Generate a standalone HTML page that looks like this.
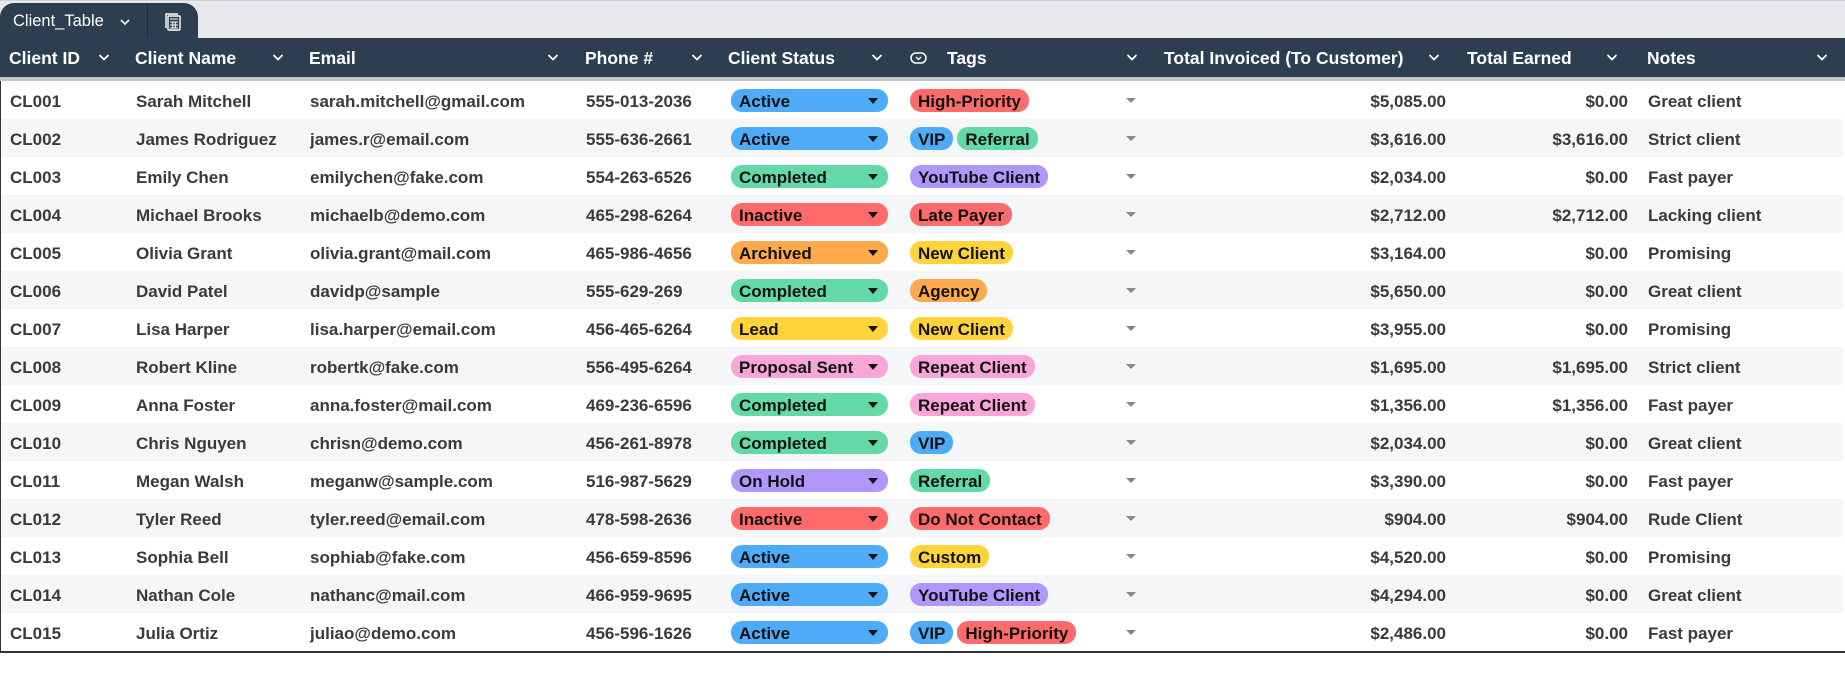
<!DOCTYPE html>
<html><head><meta charset="utf-8"><style>
*{box-sizing:border-box;margin:0;padding:0}
body{width:1845px;height:673px;background:#fff;font-family:"Liberation Sans",Arial,sans-serif;position:relative;overflow:hidden}
.topbar{position:absolute;left:0;top:0;width:1845px;height:38px;background:#e8e9ec;border-top:1px solid #d0d2d6}
.tab{position:absolute;left:0;top:3px;width:198px;height:36px;background:#2c3e50;border-radius:14px 14px 0 0;color:#fff}
.tab .t{position:absolute;left:13px;top:9px;font-size:16.5px}
.hdr{position:absolute;left:0;top:38px;width:1845px;height:39px;background:#2c3e50;color:#fff;font-weight:bold;font-size:17.5px}
.hdr div{position:absolute;top:10px;white-space:nowrap}
.hdr svg.c{position:absolute;top:15px}
.strip{position:absolute;left:0;top:77px;width:1845px;height:4px;background:#c4c7ca}
.row{position:absolute;left:0;width:1843px;height:38px;font-size:17px;font-weight:bold;color:#3a3a3a;border-left:1px solid #333}
.row.a{background:#f5f6f8}
.row div{position:absolute;top:11px;white-space:nowrap}
.r{text-align:right}
.pill{top:8px!important;height:23px;border-radius:11px;color:#111;padding:3px 8px 0 8px;font-size:17px}
.st{left:730px;width:157px}
.st:after{content:"";position:absolute;right:10px;top:9px;border-left:5px solid transparent;border-right:5px solid transparent;border-top:6px solid #111}
.tg{position:static!important;display:inline-block;margin-right:4px}
.tags{left:909px;top:8px!important}
.dd{left:1125px;top:17px!important;border-left:5px solid transparent;border-right:5px solid transparent;border-top:5px solid #888;width:0;height:0}
.bl{background:#4dabf7}.gr{background:#63d9a8}.rd{background:#ff6b6b}.or{background:#ffa94d}.ye{background:#ffd43b}.pk{background:#f8a5d8}.pu{background:#b197fc}
.bottom{position:absolute;left:0;top:651px;width:1845px;height:2px;background:#333}
</style></head><body>
<div class="topbar"></div>
<div class="tab"><span class="t">Client_Table</span>
<svg style="position:absolute;left:119px;top:14px" width="12" height="10"><path d="M2 3l4 4 4-4" stroke="#fff" stroke-width="1.6" fill="none"/></svg>
<div style="position:absolute;left:147px;top:0;width:1px;height:36px;background:#1d2a38"></div>
<svg style="position:absolute;left:162px;top:8px" width="22" height="22" viewBox="0 0 22 22" fill="none" stroke="#fff" stroke-width="1.4"><rect x="6" y="5" width="12" height="14" rx="1"/><path d="M4 17V3h12"/><path d="M8 8h8M8 11h8M8 14h8M8 17h8M10.7 11v6M13.3 11v6" stroke-width="1"/></svg>
</div>
<div class="hdr">
<div style="left:9px">Client ID</div>
<div style="left:135px">Client Name</div>
<div style="left:309px">Email</div>
<div style="left:585px">Phone #</div>
<div style="left:728px">Client Status</div>
<svg style="position:absolute;left:910px;top:13px" width="18" height="14"><rect x="1" y="2" width="15" height="10" rx="5" stroke="#fff" stroke-width="1.5" fill="none"/><path d="M6 6l2.5 2.5L11 6" stroke="#fff" stroke-width="1.3" fill="none"/></svg>
<div style="left:947px">Tags</div>
<div style="left:1164px">Total Invoiced (To Customer)</div>
<div style="left:1467px">Total Earned</div>
<div style="left:1647px">Notes</div>
<svg class="c" style="left:98px" width="12" height="9"><path d="M1.5 2l4.5 4.5L10.5 2" stroke="#fff" stroke-width="1.7" fill="none"/></svg>
<svg class="c" style="left:272px" width="12" height="9"><path d="M1.5 2l4.5 4.5L10.5 2" stroke="#fff" stroke-width="1.7" fill="none"/></svg>
<svg class="c" style="left:547px" width="12" height="9"><path d="M1.5 2l4.5 4.5L10.5 2" stroke="#fff" stroke-width="1.7" fill="none"/></svg>
<svg class="c" style="left:691px" width="12" height="9"><path d="M1.5 2l4.5 4.5L10.5 2" stroke="#fff" stroke-width="1.7" fill="none"/></svg>
<svg class="c" style="left:871px" width="12" height="9"><path d="M1.5 2l4.5 4.5L10.5 2" stroke="#fff" stroke-width="1.7" fill="none"/></svg>
<svg class="c" style="left:1126px" width="12" height="9"><path d="M1.5 2l4.5 4.5L10.5 2" stroke="#fff" stroke-width="1.7" fill="none"/></svg>
<svg class="c" style="left:1428px" width="12" height="9"><path d="M1.5 2l4.5 4.5L10.5 2" stroke="#fff" stroke-width="1.7" fill="none"/></svg>
<svg class="c" style="left:1606px" width="12" height="9"><path d="M1.5 2l4.5 4.5L10.5 2" stroke="#fff" stroke-width="1.7" fill="none"/></svg>
<svg class="c" style="left:1816px" width="12" height="9"><path d="M1.5 2l4.5 4.5L10.5 2" stroke="#fff" stroke-width="1.7" fill="none"/></svg>
</div>
<div class="strip"></div>

<div class="row" style="top:81px"><div style="left:9px">CL001</div><div style="left:135px">Sarah Mitchell</div><div style="left:309px">sarah.mitchell@gmail.com</div><div style="left:585px">555-013-2036</div><div class="pill st bl">Active</div><div class="tags"><span class="pill tg rd">High-Priority</span></div><div class="dd"></div><div class="r" style="right:397px">$5,085.00</div><div class="r" style="right:215px">$0.00</div><div style="left:1647px">Great client</div></div>
<div class="row a" style="top:119px"><div style="left:9px">CL002</div><div style="left:135px">James Rodriguez</div><div style="left:309px">james.r@email.com</div><div style="left:585px">555-636-2661</div><div class="pill st bl">Active</div><div class="tags"><span class="pill tg bl">VIP</span><span class="pill tg gr">Referral</span></div><div class="dd"></div><div class="r" style="right:397px">$3,616.00</div><div class="r" style="right:215px">$3,616.00</div><div style="left:1647px">Strict client</div></div>
<div class="row" style="top:157px"><div style="left:9px">CL003</div><div style="left:135px">Emily Chen</div><div style="left:309px">emilychen@fake.com</div><div style="left:585px">554-263-6526</div><div class="pill st gr">Completed</div><div class="tags"><span class="pill tg pu">YouTube Client</span></div><div class="dd"></div><div class="r" style="right:397px">$2,034.00</div><div class="r" style="right:215px">$0.00</div><div style="left:1647px">Fast payer</div></div>
<div class="row a" style="top:195px"><div style="left:9px">CL004</div><div style="left:135px">Michael Brooks</div><div style="left:309px">michaelb@demo.com</div><div style="left:585px">465-298-6264</div><div class="pill st rd">Inactive</div><div class="tags"><span class="pill tg rd">Late Payer</span></div><div class="dd"></div><div class="r" style="right:397px">$2,712.00</div><div class="r" style="right:215px">$2,712.00</div><div style="left:1647px">Lacking client</div></div>
<div class="row" style="top:233px"><div style="left:9px">CL005</div><div style="left:135px">Olivia Grant</div><div style="left:309px">olivia.grant@mail.com</div><div style="left:585px">465-986-4656</div><div class="pill st or">Archived</div><div class="tags"><span class="pill tg ye">New Client</span></div><div class="dd"></div><div class="r" style="right:397px">$3,164.00</div><div class="r" style="right:215px">$0.00</div><div style="left:1647px">Promising</div></div>
<div class="row a" style="top:271px"><div style="left:9px">CL006</div><div style="left:135px">David Patel</div><div style="left:309px">davidp@sample</div><div style="left:585px">555-629-269</div><div class="pill st gr">Completed</div><div class="tags"><span class="pill tg or">Agency</span></div><div class="dd"></div><div class="r" style="right:397px">$5,650.00</div><div class="r" style="right:215px">$0.00</div><div style="left:1647px">Great client</div></div>
<div class="row" style="top:309px"><div style="left:9px">CL007</div><div style="left:135px">Lisa Harper</div><div style="left:309px">lisa.harper@email.com</div><div style="left:585px">456-465-6264</div><div class="pill st ye">Lead</div><div class="tags"><span class="pill tg ye">New Client</span></div><div class="dd"></div><div class="r" style="right:397px">$3,955.00</div><div class="r" style="right:215px">$0.00</div><div style="left:1647px">Promising</div></div>
<div class="row a" style="top:347px"><div style="left:9px">CL008</div><div style="left:135px">Robert Kline</div><div style="left:309px">robertk@fake.com</div><div style="left:585px">556-495-6264</div><div class="pill st pk">Proposal Sent</div><div class="tags"><span class="pill tg pk">Repeat Client</span></div><div class="dd"></div><div class="r" style="right:397px">$1,695.00</div><div class="r" style="right:215px">$1,695.00</div><div style="left:1647px">Strict client</div></div>
<div class="row" style="top:385px"><div style="left:9px">CL009</div><div style="left:135px">Anna Foster</div><div style="left:309px">anna.foster@mail.com</div><div style="left:585px">469-236-6596</div><div class="pill st gr">Completed</div><div class="tags"><span class="pill tg pk">Repeat Client</span></div><div class="dd"></div><div class="r" style="right:397px">$1,356.00</div><div class="r" style="right:215px">$1,356.00</div><div style="left:1647px">Fast payer</div></div>
<div class="row a" style="top:423px"><div style="left:9px">CL010</div><div style="left:135px">Chris Nguyen</div><div style="left:309px">chrisn@demo.com</div><div style="left:585px">456-261-8978</div><div class="pill st gr">Completed</div><div class="tags"><span class="pill tg bl">VIP</span></div><div class="dd"></div><div class="r" style="right:397px">$2,034.00</div><div class="r" style="right:215px">$0.00</div><div style="left:1647px">Great client</div></div>
<div class="row" style="top:461px"><div style="left:9px">CL011</div><div style="left:135px">Megan Walsh</div><div style="left:309px">meganw@sample.com</div><div style="left:585px">516-987-5629</div><div class="pill st pu">On Hold</div><div class="tags"><span class="pill tg gr">Referral</span></div><div class="dd"></div><div class="r" style="right:397px">$3,390.00</div><div class="r" style="right:215px">$0.00</div><div style="left:1647px">Fast payer</div></div>
<div class="row a" style="top:499px"><div style="left:9px">CL012</div><div style="left:135px">Tyler Reed</div><div style="left:309px">tyler.reed@email.com</div><div style="left:585px">478-598-2636</div><div class="pill st rd">Inactive</div><div class="tags"><span class="pill tg rd">Do Not Contact</span></div><div class="dd"></div><div class="r" style="right:397px">$904.00</div><div class="r" style="right:215px">$904.00</div><div style="left:1647px">Rude Client</div></div>
<div class="row" style="top:537px"><div style="left:9px">CL013</div><div style="left:135px">Sophia Bell</div><div style="left:309px">sophiab@fake.com</div><div style="left:585px">456-659-8596</div><div class="pill st bl">Active</div><div class="tags"><span class="pill tg ye">Custom</span></div><div class="dd"></div><div class="r" style="right:397px">$4,520.00</div><div class="r" style="right:215px">$0.00</div><div style="left:1647px">Promising</div></div>
<div class="row a" style="top:575px"><div style="left:9px">CL014</div><div style="left:135px">Nathan Cole</div><div style="left:309px">nathanc@mail.com</div><div style="left:585px">466-959-9695</div><div class="pill st bl">Active</div><div class="tags"><span class="pill tg pu">YouTube Client</span></div><div class="dd"></div><div class="r" style="right:397px">$4,294.00</div><div class="r" style="right:215px">$0.00</div><div style="left:1647px">Great client</div></div>
<div class="row" style="top:613px"><div style="left:9px">CL015</div><div style="left:135px">Julia Ortiz</div><div style="left:309px">juliao@demo.com</div><div style="left:585px">456-596-1626</div><div class="pill st bl">Active</div><div class="tags"><span class="pill tg bl">VIP</span><span class="pill tg rd">High-Priority</span></div><div class="dd"></div><div class="r" style="right:397px">$2,486.00</div><div class="r" style="right:215px">$0.00</div><div style="left:1647px">Fast payer</div></div>
<div class="bottom"></div>
</body></html>
